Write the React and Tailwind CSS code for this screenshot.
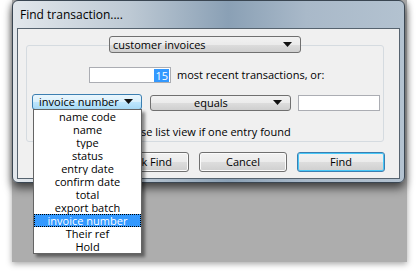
import { useState } from "react";

const fields = [
	"name code",
	"name",
	"type",
	"status",
	"entry date",
	"confirm date",
	"total",
	"export batch",
	"invoice number",
	"Their ref",
	"Hold",
];

function Arrow() {
	return (
		<svg width="9" height="5" viewBox="0 0 9 5" className="shrink-0">
			<path d="M0 0h9L4.5 5z" fill="#111" />
		</svg>
	);
}

function Select({ label, className, focused }) {
	return (
		<div
			className={
				"flex items-center rounded-[3px] border pr-[8px] " +
				(focused
					? "border-[#3c7fb1] bg-[linear-gradient(#eaf6fd,#d9f0fc_50%,#bee6fd_51%,#a7d9f5)] "
					: "border-[#707070] bg-[linear-gradient(#f2f2f2,#ebebeb_50%,#dddddd_51%,#cfcfcf)] ") +
				className
			}
		>
			<span className="flex-1 leading-none">{label}</span>
			<Arrow />
		</div>
	);
}

function Button({ label, primary }) {
	return (
		<div
			className={
				"flex h-[20px] w-[88px] items-center justify-center rounded-[3px] border bg-[linear-gradient(#f2f2f2,#ebebeb_50%,#dddddd_51%,#cfcfcf)] " +
				(primary
					? "border-[#3c7fb1] shadow-[inset_0_0_0_1px_#48c8f8]"
					: "border-[#707070] shadow-[inset_0_0_0_1px_#fbfbfb]")
			}
		>
			{label}
		</div>
	);
}

export default function App() {
	const [selected] = useState("invoice number");

	return (
		<div className="relative h-[274px] w-[419px] overflow-hidden bg-white font-['Open_Sans',sans-serif] text-[11px] text-black">
			{/* parent window behind the dialog */}
			<div className="absolute left-[12px] top-0 h-[262px] w-[395px] bg-[#adadad] shadow-[0_2px_6px_rgba(0,0,0,0.35)]" />

			{/* dialog window */}
			<div className="absolute left-[12px] top-0 flex h-[183px] w-[393px] flex-col rounded-[6px] border border-[#3a4652] bg-[linear-gradient(90deg,#e2e7ec,#bdc9d4_30%,#8aa0b5_55%,#a9b9c9_75%,#b3c2d0)] shadow-[0_5px_10px_rgba(0,0,0,0.65)]">
				<div className="flex h-[27px] items-center pl-[7px] pt-[1px] text-[12px]">
					Find transaction....
				</div>

				<div className="mx-[4px] mb-[3px] flex-1 border border-[#56636f] bg-[#f0f0f0]">
					<div className="ml-[8px] mt-[16px] flex h-[97px] w-[358px] flex-col rounded-[3px] border border-[#d5dbe0]">
						<Select
							label="customer invoices"
							className="-mt-[10px] ml-[82px] h-[17px] w-[192px] pl-[3px]"
						/>

						<div className="ml-[62px] mt-[14px] flex items-center">
							<div className="flex h-[16px] w-[82px] items-center justify-end border border-[#abadb3] bg-white pr-[1px]">
								<span className="bg-[#3399ff] px-[1px] leading-[13px] text-white">15</span>
							</div>
							<span className="ml-[6px]">most recent transactions, or:</span>
						</div>

						<div className="ml-[5px] mt-[10px] flex items-start">
							<Select label="invoice number" focused className="h-[16px] w-[110px] pl-[6px]" />
							<Select label="equals" className="ml-[8px] mt-[1px] h-[16px] w-[141px] pl-[43px]" />
							<div className="ml-[7px] mt-[1px] h-[16px] w-[82px] border border-[#abadb3] bg-white" />
						</div>

						<div className="ml-[89px] mt-[13px] flex items-center gap-[4px]">
							<div className="h-[13px] w-[13px] border border-[#8f8f8f] bg-white" />
							<span>Use list view if one entry found</span>
						</div>
					</div>

					<div className="mt-[10px] flex justify-end gap-[10px] pr-[14px]">
						<Button label="Quick Find" />
						<Button label="Cancel" />
						<Button label="Find" primary />
					</div>
				</div>
			</div>

			{/* open field list */}
			<div className="absolute left-[33px] top-[109px] w-[109px] border border-[#646464] bg-white shadow-[3px_3px_3px_rgba(0,0,0,0.45)]">
				{fields.map((f) => (
					<div
						key={f}
						className={
							"h-[13px] overflow-hidden text-center leading-[13px] " +
							(f === selected
								? "bg-[#3399ff] text-white outline-1 -outline-offset-1 outline-black outline-dotted"
								: "")
						}
					>
						{f}
					</div>
				))}
			</div>
		</div>
	);
}
